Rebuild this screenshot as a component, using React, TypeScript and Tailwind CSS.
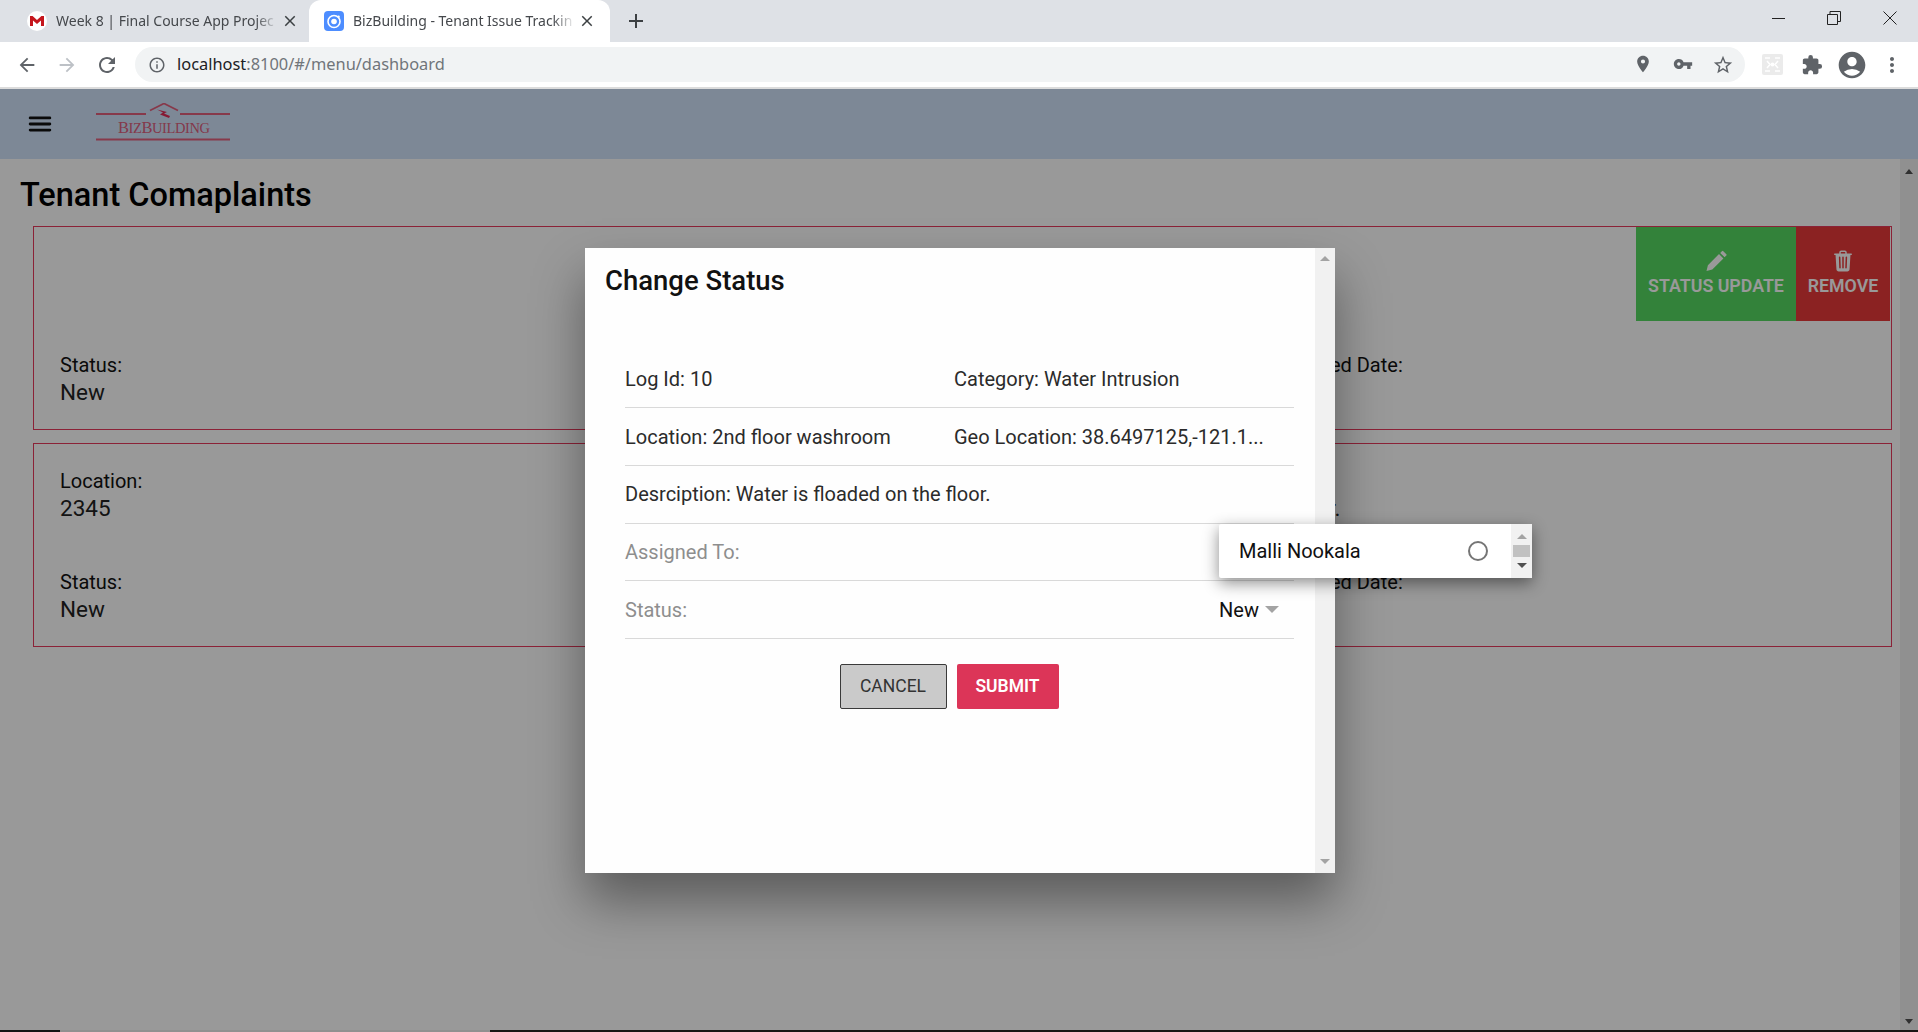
import { IoMenu, IoTrash } from "react-icons/io5";
import {
  MdAccountCircle,
  MdAdd,
  MdArrowBack,
  MdArrowForward,
  MdClose,
  MdExtension,
  MdInfoOutline,
  MdMoreVert,
  MdPlace,
  MdRefresh,
  MdStarBorder,
  MdVpnKey,
} from "react-icons/md";

const GmailIcon = () => (
  <svg width="20" height="20" viewBox="0 0 20 20">
    <circle cx="10" cy="10" r="10" fill="#fff" />
    <path d="M3 15V5h2.600L10 9l4.400-4H17v10h-3V9.400L10 13 6 9.400V15z" fill="#c5161d" />
  </svg>
);

const IonicIcon = () => (
  <svg width="20" height="20" viewBox="0 0 20 20">
    <rect width="20" height="20" rx="4" fill="#4d8dff" />
    <circle cx="10" cy="10.5" r="6" fill="none" stroke="#fff" strokeWidth="1.6" />
    <circle cx="10" cy="10.5" r="2.8" fill="#fff" />
    <circle cx="14.6" cy="5.8" r="1.2" fill="#fff" />
  </svg>
);

const PencilIcon = () => (
  <svg width="24" height="24" viewBox="0 0 24 24" fill="currentColor">
    <path d="M2.500 22l1.400-5.800L15 5.100l4.400 4.400L8.300 20.600zM16.200 3.900l1.700-1.700a1 1 0 0 1 1.400 0l3 3a1 1 0 0 1 0 1.400l-1.700 1.700z" />
  </svg>
);

const ExtensionThumb = () => (
  <svg width="21" height="21" viewBox="0 0 21 21">
    <rect width="21" height="21" rx="2" fill="#ebebeb" />
    <path d="M3 4h5M13 4h5M3 17h5M13 17h5M5 7l3 3.500-3 3.500M16 7l-3 3.500 3 3.500" fill="none" stroke="#fff" strokeWidth="1.5" />
    <circle cx="10.5" cy="10.5" r="2" fill="#fff" />
  </svg>
);

const Logo = () => (
  <svg width="136" height="42" viewBox="0 0 136 42" className="ml-[41px]">
    <path d="M0 11h50M84 11h50M0 36.500h134" stroke="#e2607c" strokeWidth="2" />
    <path d="M54 7.500 68 .5l14 7" fill="none" stroke="#e2607c" strokeWidth="1.8" />
    <path d="M61 6.500l10 2.500-3 1.500 6 2.500-1 2-9-3.500 3-2z" fill="#e02a55" />
    <text x="22" y="29.500" fontFamily="Liberation Serif, serif" fontSize="14.5" fill="#dc5f7d" textLength="92">
      <tspan fontSize="16.5">B</tspan>IZ<tspan fontSize="16.5">B</tspan>UILDING
    </text>
  </svg>
);

const Tab = ({ icon, title, active }: { icon: React.ReactNode; title: string; active?: boolean }) => (
  <div className={`flex h-full items-center rounded-t-xl ${active ? "w-[301px] bg-white pl-[15px]" : "w-[299px] pl-[17px]"}`}>
    {icon}
    <span className="mb-[2px] ml-[9px] w-[222px] overflow-hidden whitespace-nowrap text-[14px] text-[#45484c] [mask-image:linear-gradient(to_right,black_90%,transparent)]">
      {title}
    </span>
    <MdClose className="ml-[3px] text-[#3c4043]" size={18} />
  </div>
);

const Field = ({ label, value }: { label: string; value?: string }) => (
  <div className="h-[54px]">
    <div className="h-[25px] text-[20px] leading-6 text-[#111]">{label}</div>
    <div className="h-[29px] text-[22.5px] leading-[29px] text-[#222]">{value}</div>
  </div>
);

const ModalRow = ({ children }: { children: React.ReactNode }) => (
  <div className="flex h-[57.7px] items-center border-b border-[#d9d9d9] text-[20px] text-[#2b2b2b]">{children}</div>
);

export default function App() {
  return (
    <div className="relative flex h-[1032px] w-[1918px] flex-col overflow-hidden bg-white font-['Roboto',sans-serif]">
      {/* browser tabs */}
      <div className="flex h-[42px] shrink-0 items-end bg-[#dee1e6] pl-[10px] font-['Noto_Sans',sans-serif]">
        <div className="flex h-full">
          <Tab icon={<GmailIcon />} title="Week 8 | Final Course App Projec" />
          <Tab active icon={<IonicIcon />} title="BizBuilding - Tenant Issue Trackin" />
        </div>
        <MdAdd className="ml-[14px] self-center text-[#3c4043]" size={24} />
        <div className="ml-auto flex h-full items-start text-[#222]">
          <div className="flex h-[36px] w-[56px] items-center justify-center">
            <div className="h-px w-[13px] bg-[#222]" />
          </div>
          <div className="flex h-[36px] w-[56px] items-center justify-center">
            <svg width="14" height="14" viewBox="0 0 14 14" fill="none" stroke="#222">
              <path d="M.5 3.500h10v10H.5zM3 3.500V.5h10.500v10h-3" />
            </svg>
          </div>
          <div className="flex h-[36px] w-[56px] items-center justify-center">
            <svg width="14" height="14" viewBox="0 0 14 14" fill="none" stroke="#222">
              <path d="M.5.5l13 13M13.500.5l-13 13" />
            </svg>
          </div>
        </div>
      </div>

      {/* browser toolbar */}
      <div className="flex h-[47px] shrink-0 items-center border-b-2 border-[#dcdcdc] bg-white pl-[7px] pr-[5px]">
        <div className="flex w-10 justify-center"><MdArrowBack size={22} className="text-[#5f6368]" /></div>
        <div className="flex w-10 justify-center"><MdArrowForward size={22} className="text-[#bdc1c6]" /></div>
        <div className="flex w-10 justify-center"><MdRefresh size={24} className="text-[#5f6368]" /></div>
        <div className="ml-[8px] flex h-[35px] w-[1610px] items-center rounded-full bg-[#f1f3f4] pl-[13px] pr-[2px]">
          <MdInfoOutline size={18} className="text-[#5f6368]" />
          <span className="ml-[11px] font-['Noto_Sans',sans-serif] text-[16.4px] text-[#70757a]">
            <span className="text-[#202124]">localhost</span>:8100/#/menu/dashboard
          </span>
          <div className="ml-auto flex text-[#5f6368]">
            <div className="flex w-10 justify-center"><MdPlace size={20} /></div>
            <div className="flex w-10 justify-center"><MdVpnKey size={20} /></div>
            <div className="flex w-10 justify-center"><MdStarBorder size={22} /></div>
          </div>
        </div>
        <div className="ml-[7px] flex items-center text-[#5f6368]">
          <div className="flex w-10 justify-center"><ExtensionThumb /></div>
          <div className="flex w-10 justify-center"><MdExtension size={22} /></div>
          <div className="flex w-10 justify-center"><MdAccountCircle size={32} /></div>
          <div className="flex w-10 justify-center"><MdMoreVert size={24} /></div>
        </div>
      </div>

      {/* app */}
      <div className="relative flex min-h-0 flex-1 flex-col">
        <header className="flex h-[70px] shrink-0 items-center bg-[#d0e3fb] pl-[25px]">
          <IoMenu size={30} className="text-[#111]" />
          <Logo />
        </header>

        <div className="flex min-h-0 flex-1">
          <main className="min-w-0 flex-1 pr-[8px]">
            <h1 className="pl-[20px] pt-[17px] text-[32.5px] font-medium leading-[38px] text-black">Tenant Comaplaints</h1>
            <div className="ml-[33px] mt-[12px] flex w-[1859px] flex-col gap-[13px]">
              <section className="relative grid h-[204px] grid-cols-[611px_606px_1fr] content-start gap-y-[47px] border border-[#e8395d] pl-[26px] pt-[25px]">
                <Field label="" />
                <Field label="" />
                <Field label="" />
                <Field label="Status:" value="New" />
                <Field label="" />
                <Field label="Updated Date:" />
                <div className="absolute right-[1px] top-0 flex h-[94px]">
                  <div className="flex w-[160px] flex-col items-center justify-center bg-[#55d961] text-[17.8px] font-semibold text-white">
                    <PencilIcon />
                    <span>STATUS UPDATE</span>
                  </div>
                  <div className="flex w-[94px] flex-col items-center justify-center bg-[#e83939] text-[17.8px] font-semibold text-white">
                    <IoTrash size={24} />
                    <span>REMOVE</span>
                  </div>
                </div>
              </section>
              <section className="grid h-[204px] grid-cols-[611px_606px_1fr] content-start gap-y-[47px] border border-[#e8395d] pl-[26px] pt-[25px]">
                <Field label="Location:" value="2345" />
                <Field label="" />
                <Field label="Log:" value="Water." />
                <Field label="Status:" value="New" />
                <Field label="" />
                <Field label="Updated Date:" />
              </section>
            </div>
          </main>
          <div className="flex w-[18px] shrink-0 flex-col items-center justify-between bg-[#f1f1f1] pb-[6px] pt-[10px] text-[#505050]">
            <div className="h-0 w-0 border-x-[4px] border-b-[5px] border-x-transparent border-b-current" />
            <div className="h-0 w-0 border-x-[4px] border-t-[5px] border-x-transparent border-t-current" />
          </div>
        </div>

        <div className="flex h-[2px] shrink-0">
          <div className="w-[60px] bg-[#222]" />
          <div className="w-[430px] bg-[#f0f0f0]" />
          <div className="flex-1 bg-[#2a2522]" />
        </div>

        <div className="absolute inset-0 bg-black/40" />
      </div>

      {/* status dialog */}
      <div className="absolute left-[585px] top-[248px] flex h-[625px] w-[750px] bg-[#fefefe] shadow-[0_28px_48px_rgba(0,0,0,0.4)]">
        <div className="min-w-0 flex-1 px-[20px]">
          <h2 className="pt-[15px] text-[27.5px] font-medium leading-[36px] text-[#111]">Change Status</h2>
          <div className="ml-[20px] mr-[1px] mt-[51.5px]">
            <ModalRow>
              <span className="w-[329px]">Log Id: 10</span>
              <span>Category: Water Intrusion</span>
            </ModalRow>
            <ModalRow>
              <span className="w-[329px]">Location: 2nd floor washroom</span>
              <span>Geo Location: 38.6497125,-121.1...</span>
            </ModalRow>
            <ModalRow>
              <span>Desrciption: Water is floaded on the floor.</span>
            </ModalRow>
            <ModalRow>
              <span className="text-[#8e8e8e]">Assigned To:</span>
            </ModalRow>
            <ModalRow>
              <span className="text-[#8e8e8e]">Status:</span>
              <span className="ml-auto mr-[15px] flex items-center text-[#111]">
                New
                <span className="ml-[6px] h-0 w-0 border-x-[7px] border-t-[7px] border-x-transparent border-t-[#a3a3a3]" />
              </span>
            </ModalRow>
            <div className="mt-[25px] flex justify-center gap-[10px] pr-[21px]">
              <button className="h-[45px] w-[107px] rounded-[2px] border-[1.5px] border-[#3a3a3a] bg-[#cacaca] text-[17.5px] text-[#333]">
                CANCEL
              </button>
              <button className="h-[45px] w-[102px] rounded-[2px] bg-[#dc3558] text-[17.5px] font-semibold text-white">
                SUBMIT
              </button>
            </div>
          </div>
        </div>
        <div className="flex w-[20px] shrink-0 flex-col items-center justify-between bg-[#f1f1f1] pb-[9px] pt-[8px]">
          <div className="h-0 w-0 border-x-[5px] border-b-[5px] border-x-transparent border-b-[#a3a3a3]" />
          <div className="h-0 w-0 border-x-[5px] border-t-[5px] border-x-transparent border-t-[#a3a3a3]" />
        </div>
      </div>

      {/* assigned-to popover */}
      <div className="absolute left-[1219px] top-[524px] flex h-[54px] w-[313px] rounded-[2px] bg-white shadow-[0_5px_16px_rgba(0,0,0,0.45)]">
        <div className="flex flex-1 items-center pl-[20px] pr-[23px]">
          <span className="text-[20px] text-[#111]">Malli Nookala</span>
          <span className="ml-auto h-5 w-5 rounded-full border-2 border-[#757575]" />
        </div>
        <div className="flex w-[21px] shrink-0 flex-col items-center justify-center gap-[6px] bg-[#f1f1f1]">
          <div className="h-0 w-0 border-x-[5px] border-b-[5px] border-x-transparent border-b-[#a3a3a3]" />
          <div className="h-[12px] w-[17px] bg-[#c1c1c1]" />
          <div className="h-0 w-0 border-x-[5px] border-t-[5px] border-x-transparent border-t-[#505050]" />
        </div>
      </div>
    </div>
  );
}
